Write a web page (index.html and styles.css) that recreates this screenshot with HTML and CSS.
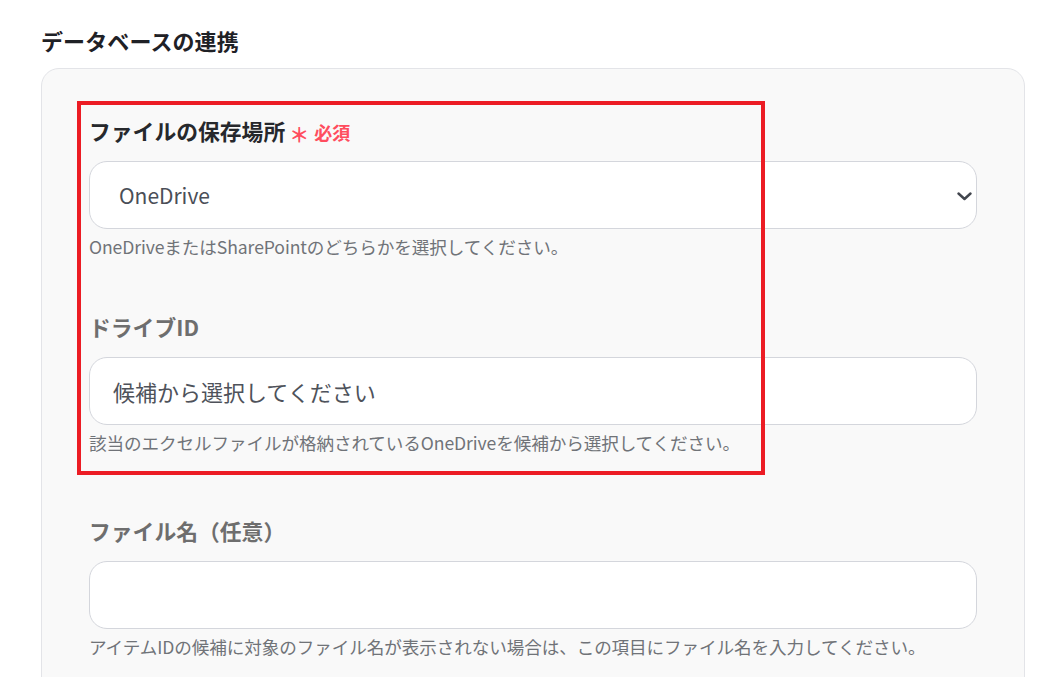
FILE: index.html
```html
<!DOCTYPE html>
<html lang="ja">
<head>
<meta charset="utf-8">
<title>データベースの連携</title>
<link rel="stylesheet" href="styles.css">
</head>
<body>
<div class="page">
  <h2 class="title">データベースの連携</h2>
  <div class="card">
    <div class="highlight"></div>
    <div class="field">
      <div class="label">ファイルの保存場所<span class="ast">＊</span><span class="req">必須</span></div>
      <div class="control select">
        <span class="value">OneDrive</span>
        <svg class="chev" width="15" height="9" viewBox="0 0 15 9"><path d="M1.5 1.5 L7.5 7 L13.5 1.5" fill="none" stroke="#42464e" stroke-width="2.4" stroke-linecap="round" stroke-linejoin="round"/></svg>
      </div>
      <div class="help">OneDriveまたはSharePointのどちらかを選択してください。</div>
    </div>
    <div class="field">
      <div class="label muted">ドライブID</div>
      <div class="control"><span class="placeholder">候補から選択してください</span></div>
      <div class="help">該当のエクセルファイルが格納されているOneDriveを候補から選択してください。</div>
    </div>
    <div class="field field-wide">
      <div class="label muted">ファイル名（任意）</div>
      <div class="control"></div>
      <div class="help">アイテムIDの候補に対象のファイル名が表示されない場合は、この項目にファイル名を入力してください。</div>
    </div>
  </div>
</div>
</body>
</html>
```
FILE: styles.css
```css
* { box-sizing: border-box; }
html, body { margin: 0; padding: 0; background: #ffffff; }
body {
  font-family: "Noto Sans CJK JP", "Noto Sans", sans-serif;
  color: #222222;
  height: 677px;
  overflow: hidden;
}
.page {
  padding: 28px 24px 0 41px;
}
.title {
  margin: 0;
  font-size: 22px;
  line-height: 24px;
  font-weight: 700;
  color: #1f2126;
  letter-spacing: 0.1px;
}
.card {
  position: relative;
  margin-top: 16px;
  width: 984px;
  height: 700px;
  border: 1px solid #e3e4e8;
  border-radius: 18px;
  background: #f9f9f9;
  padding: 47px 47px 0 47px;
}
.highlight {
  position: absolute;
  left: 35px;
  top: 32px;
  width: 688px;
  height: 374px;
  border: 4.5px solid #ec1c24;
  pointer-events: none;
}
.field + .field { margin-top: 53px; }
.field.field-wide { margin-top: 61px; }
.label {
  font-size: 21.8px;
  line-height: 30px;
  height: 30px;
  font-weight: 700;
  color: #26282c;
  white-space: nowrap;
}
.label.muted { color: #6e6e6e; }
.ast {
  display: inline-block;
  color: #ff4d5e;
  font-size: 20px;
  margin-left: 4px;
  margin-right: 5px;
  position: relative;
  top: 3px;
}
.req {
  color: #ff4d5e;
  font-size: 18px;
  font-weight: 700;
}
.control {
  margin-top: 15px;
  height: 68px;
  border: 1px solid #d4d6dc;
  border-radius: 18px;
  background: #ffffff;
  display: flex;
  align-items: center;
  padding: 0 4px 0 23px;
  font-size: 21.5px;
}
.select { padding-left: 29px; justify-content: space-between; }
.value { color: #4a4e57; font-size: 21px; }
.placeholder { color: #4e525a; font-size: 22px; }
.chev { margin-top: 2px; }
.help {
  margin-top: 6px;
  font-size: 17.6px;
  line-height: 24px;
  color: #707378;
  white-space: nowrap;
  letter-spacing: -0.1px;
}
```
